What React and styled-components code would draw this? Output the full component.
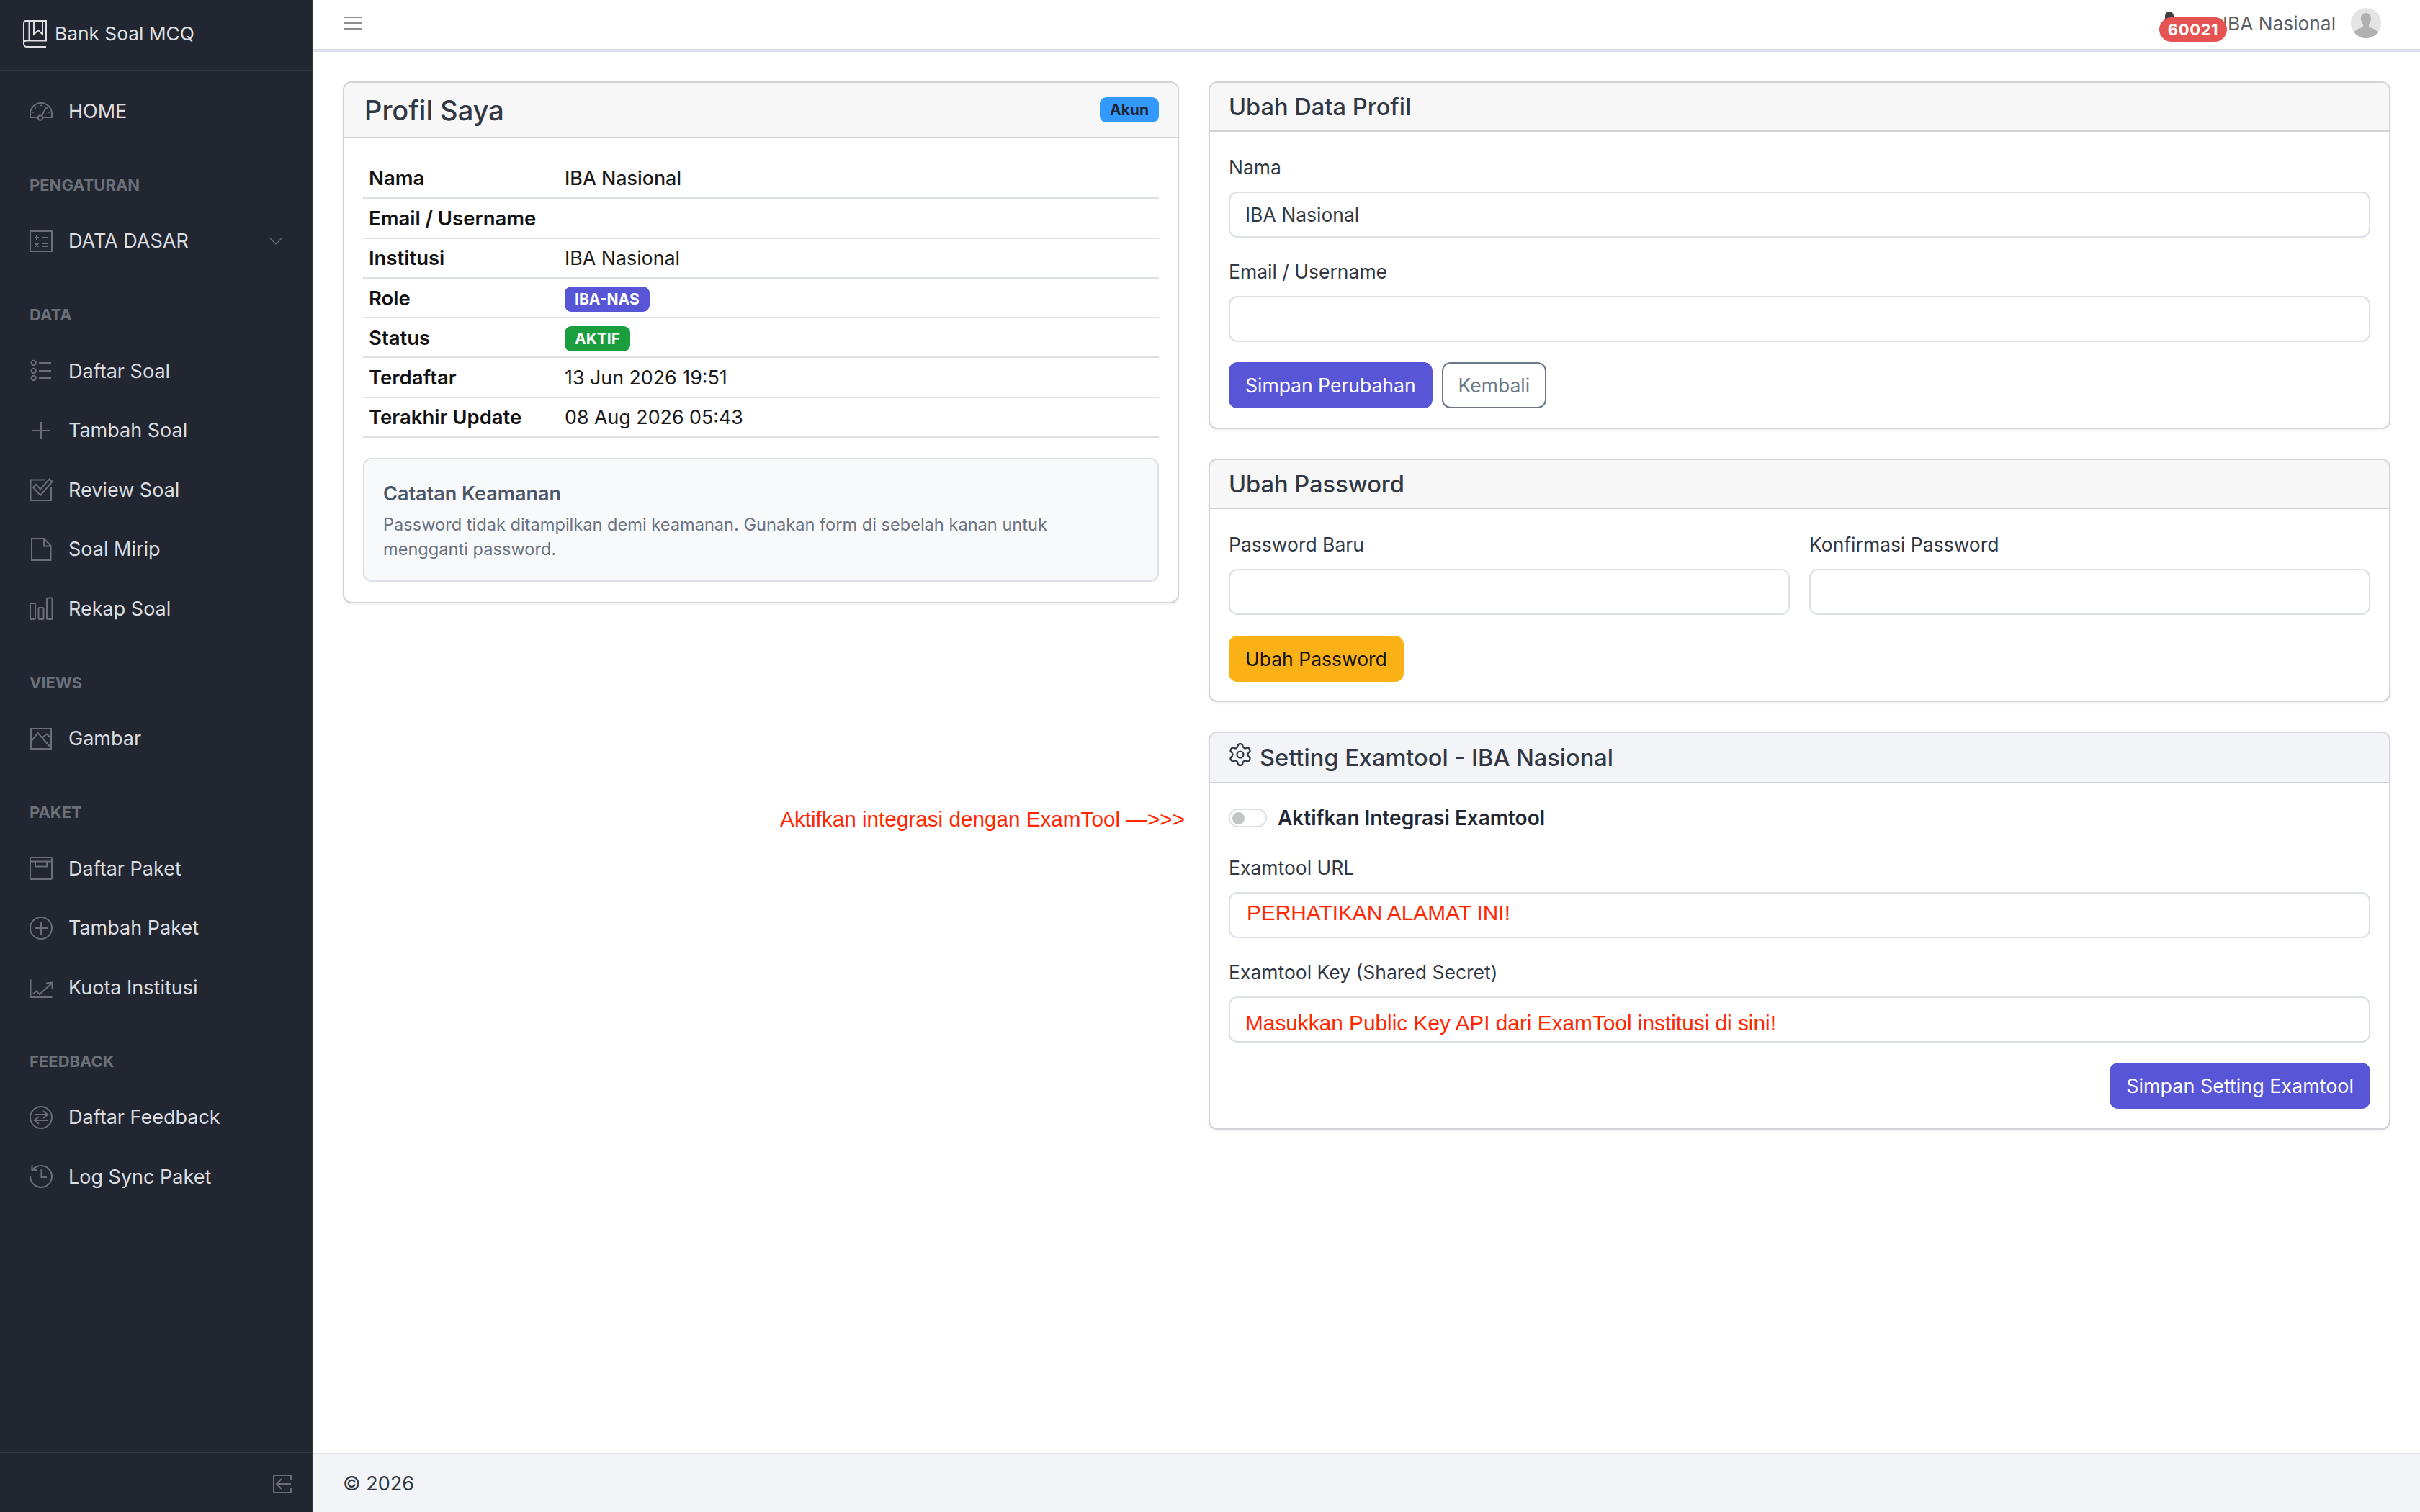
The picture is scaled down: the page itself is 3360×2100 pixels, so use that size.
import React from "react";
import styled, { createGlobalStyle } from "styled-components";
import { Settings } from "lucide-react";

const Global = createGlobalStyle`
  html, body { margin: 0; padding: 0; background: #fff; }
  * { box-sizing: border-box; }
  body { font-family: Inter, "Noto Sans", sans-serif; color: #212631; }
`;

const Shell = styled.div`display: flex; height: 2100px; width: 3360px; overflow: hidden;`;
const Sidebar = styled.aside`
  width: 435px; flex: none; background: #212631; border-right: 2px solid #2f3541;
  display: flex; flex-direction: column;
`;
const Brand = styled.div`
  height: 99px; flex: none; border-bottom: 2px solid #2f3541; display: flex; align-items: center;
  gap: 11px; padding: 0 0 4px 32px; color: #dfe0e3; font-size: 26.3px;
`;
const Nav = styled.nav`flex: 1; padding-top: 14px;`;
const NavItem = styled.div`
  height: 82.6px; display: flex; align-items: center; padding: 0 41px 0 41px; gap: 22px;
  color: #dcdde0; font-size: 27px;
  svg { flex: none; }
`;
const Chevron = styled.span`margin-left: auto; display: flex;`;
const NavTitle = styled.div`
  margin: 45.3px 0 19.5px; padding-left: 41px; height: 33px; line-height: 33px;
  font-size: 22px; font-weight: 700; color: #6c7079; text-transform: uppercase;
`;
const SideFoot = styled.div`
  height: 84px; flex: none; border-top: 2px solid #2f3541; display: flex; justify-content: flex-end;
  align-items: center; padding: 4px 28px 0 0;
`;
const Main = styled.div`flex: 1; display: flex; flex-direction: column; min-width: 0;`;
const TopBar = styled.header`
  height: 72px; flex: none; border-bottom: 4px solid #dbdfe9; display: flex; align-items: center;
  padding: 0 54px 4px 41px; position: relative;
`;
const Burger = styled.span`display: flex; width: 28px; margin-left: 2px;`;
const UserName = styled.span`margin-left: auto; font-size: 26.3px; color: #5c5f66; margin-right: 21px;`;
const Avatar = styled.span`display: flex;`;
const BellWrap = styled.span`position: absolute; left: 2565px; top: 14px; display: flex;`;
const CountBadge = styled.span`
  position: absolute; left: 2563px; top: 24px; width: 94px; height: 34px; border-radius: 17px;
  background: #e55353; color: #fff; font-size: 22px; font-weight: 700; letter-spacing: .6px;
  display: flex; align-items: center; justify-content: center;
`;
const Content = styled.main`
  flex: 1; position: relative; padding: 41px; display: grid; grid-template-columns: 1161px 1641px; gap: 41px;
  align-items: start;
`;
const Column = styled.div`display: flex; flex-direction: column; gap: 41px;`;
const Card = styled.section`
  border: 2px solid #d3d4d8; border-radius: 12px; background: #fff; overflow: hidden;
  box-shadow: 0 2px 4px rgba(0,0,0,.06);
`;
const CardHead = styled.div`
  height: ${p => p.$h}px; background: ${p => p.$bg || "#f7f7f8"}; border-bottom: 2px solid #d0d1d5;
  display: flex; align-items: center; padding: 0 26px 0 ${p => p.$pl || 26}px; gap: 9px; justify-content: ${p => p.$between ? "space-between" : "flex-start"};
`;
const GearIcon = styled(Settings)`margin: -8px 0 0 -2px; flex: none;`;
const CardTitle = styled.h2`
  margin: 0; font-weight: 500; font-size: ${p => p.$size || 32.6}px; color: #323843;
`;
const CardBody = styled.div`padding: ${p => p.$top || 28}px 26px ${p => p.$bottom || 28}px;`;
const Pill = styled.span`
  display: inline-flex; align-items: center; justify-content: center; height: 35px; padding: 0 14px;
  border-radius: 9px; background: ${p => p.$bg}; color: ${p => p.$color || "#fff"}; font-size: 21px; font-weight: 700;
`;
const RowPill = styled(Pill)`margin-top: 3px;`;
const InfoTable = styled.table`width: 100%; border-collapse: collapse; font-size: 27.5px;`;
const Row = styled.tr`height: 55.3px; border-bottom: 2px solid #dbdfe6;`;
const Th = styled.th`width: 280px; text-align: left; padding: 0 8px; font-weight: 600; color: #111;`;
const Td = styled.td`padding: 0; color: #1a1a1a; font-size: 26.8px;`;
const NameCell = styled(Td)`font-weight: 500;`;
const Note = styled.div`
  margin-top: 28px; height: 172px; border: 2px solid #dbdfe6; border-radius: 12px; background: #f8f9fb;
  padding: 28px 120px 0 26px;
`;
const NoteTitle = styled.div`font-size: 27px; font-weight: 600; color: #4a5568; line-height: 40px;`;
const NoteText = styled.div`font-size: 23.6px; color: #6b7280; line-height: 34px; margin-top: 6px;`;
const Field = styled.div`margin-bottom: ${p => p.$mb ?? 30}px;`;
const Label = styled.label`display: block; font-size: 26.5px; color: #323843; height: 34px; line-height: 34px; margin-bottom: 17px;`;
const Input = styled.input`
  display: block; width: 100%; height: 64px; border: 2px solid #dbdfe6; border-radius: 12px; background: #fff;
  padding: 0 21px; font: 26.5px Inter, sans-serif; color: #323843; outline: none;
`;
const RedInput = styled(Input)`
  font: 29.8px "Liberation Sans", Arial, sans-serif; color: #ff2600; padding-left: ${p => p.$pl || 22}px;
  padding-top: ${p => p.$pt || 0}px; padding-bottom: ${p => p.$pb || 0}px;
`;
const Actions = styled.div`display: flex; gap: 13px; justify-content: ${p => p.$end ? "flex-end" : "flex-start"};`;
const Button = styled.button`
  height: 64px; padding: 0 21px; border-radius: 12px; font: ${p => p.$fs || 26.5}px Inter, sans-serif;
  background: ${p => p.$bg || "#fff"}; color: ${p => p.$color || "#fff"};
  border: 2px solid ${p => p.$border || p.$bg};
`;
const TwoCols = styled.div`display: grid; grid-template-columns: 1fr 1fr; gap: 27px;`;
const ToggleRow = styled.div`display: flex; align-items: center; gap: 15px; height: 26px; margin-bottom: 39px;`;
const Toggle = styled.span`
  width: 53px; height: 26px; border: 2px solid #dbdfe6; border-radius: 13px; background: #fff; position: relative; display: block;
  &::after { content: ""; position: absolute; left: 3px; top: 2.5px; width: 17px; height: 17px; border-radius: 50%; background: #c3c4c4; }
`;
const ToggleLabel = styled.span`font-size: 28px; font-weight: 600; color: #212631;`;
const Annotation = styled.div`
  position: absolute; right: 1715px; top: 1049px; font: 29.7px "Liberation Sans", Arial, sans-serif; color: #ff2600; white-space: nowrap;
`;
const Footer = styled.footer`
  height: 82px; flex: none; background: #f3f4f7; border-top: 2px solid #dfe1e7; display: flex; align-items: center;
  padding: 0 41px; font-size: 27px; color: #323843;
`;

const Ic = ({ children, w = 32, h = 32, vb = "0 0 32 32", color = "#6b6e76", sw = 2 }) => (
  <svg width={w} height={h} viewBox={vb} fill="none" stroke={color} strokeWidth={sw}>{children}</svg>
);
const Dots = styled.g`fill: #6b6e76; stroke: none;`;
const I = {
  home: <Ic><path d="M11.500 25H1V20A15 15 0 0 1 31 20V25H19" /><circle cx="15" cy="25.500" r="3.200" /><path d="M17 23L23 11" /><Dots><circle cx="16" cy="8.500" r="1" /><circle cx="8" cy="12" r="1" /><circle cx="24" cy="12" r="1" /><circle cx="5" cy="18" r="1" /><circle cx="27" cy="18" r="1" /></Dots></Ic>,
  calc: <Ic><rect x="1" y="2" width="30" height="28" /><path d="M7 11h6 M10 8v6 M18 11h8 M18 19h8 M18 23h8 M7.500 18.500l5 5 M12.500 18.500l-5 5" /></Ic>,
  list: <Ic><circle cx="5.700" cy="5" r="3.200" /><circle cx="5.700" cy="16" r="3.200" /><circle cx="5.700" cy="26" r="3.200" /><path d="M13 5h17 M13 16h17 M13 26h17" /></Ic>,
  plus: <Ic><path d="M16 4v24 M4 16h24" /></Ic>,
  task: <Ic><path d="M30 12V31H1.500V2.500H22" /><path d="M5 13L15 24L31.500 5L27.500 1.500L15 15.500L9 9Z" /></Ic>,
  file: <Ic><path d="M3 1H20L29.500 11V31H3Z M20 1V11.500H29.500" /></Ic>,
  bars: <Ic><rect x="1" y="9" width="7" height="22" rx="1" /><rect x="12.500" y="15" width="7" height="16" rx="1" /><rect x="24" y="1.500" width="7.500" height="29.500" rx="1" /></Ic>,
  image: <Ic><rect x="2" y="2" width="28" height="28" /><path d="M2.300 19.500L11.700 8L29.700 28.500 M18.300 14L24 9.500L29.700 15" /></Ic>,
  box: <Ic><rect x="1" y="1" width="30" height="30" rx="1" /><path d="M1 6.500H31 M8 6.500V13.500H24V6.500" /></Ic>,
  plusc: <Ic><circle cx="16" cy="16" r="15" /><path d="M16 7v18 M7 16h18" /></Ic>,
  chart: <Ic><path d="M1.500 5.500V30H31.500 M5 25.500L9.500 21.500L14 26L30.500 11 M23 10.500L31.500 9.500V18" /></Ic>,
  swap: <Ic><circle cx="16" cy="16" r="15" /><path d="M7 12H25 M19 7l6 5-6 5 M25 20H7 M13 15l-6 5 6 5" /></Ic>,
  hist: <Ic><path d="M4 7A15 15 0 1 1 1 16 M3.500 .5V7H10 M16.500 6V17H24" /></Ic>,
};

const NavRow = ({ icon, children, right }) => (
  <NavItem>{icon}{children}{right && <Chevron>{right}</Chevron>}</NavItem>
);

const rows = [
  ["Nama", <NameCell key="n">IBA Nasional</NameCell>],
  ["Email / Username", <Td key="e" />],
  ["Institusi", <Td key="i">IBA Nasional</Td>],
  ["Role", <Td key="r"><RowPill $bg="#5856d6">IBA-NAS</RowPill></Td>],
  ["Status", <Td key="s"><RowPill $bg="#1b9e3e">AKTIF</RowPill></Td>],
  ["Terdaftar", <Td key="t">13 Jun 2026 19:51</Td>],
  ["Terakhir Update", <Td key="u">08 Aug 2026 05:43</Td>],
];

export default function App() {
  return (
    <>
      <Global />
      <Shell>
        <Sidebar>
          <Brand>
            <Ic w={33} h={38} vb="0 0 33 38" color="#dfe0e3" sw={2}>
              <path d="M4 1H32V28.500H5Q1 28.500 1 32.500T5 37H32 M1 32.500V5Q1 1 4 1 M8.500 1V28.500 M15 1V19.500L21 14L27 19.500V1" />
            </Ic>
            Bank Soal MCQ
          </Brand>
          <Nav>
            <NavRow icon={I.home}>HOME</NavRow>
            <NavTitle>Pengaturan</NavTitle>
            <NavRow icon={I.calc} right={<Ic w={18} h={18} vb="0 0 18 18" sw={1.2}><path d="M1 5l8 8 8-8" /></Ic>}>DATA DASAR</NavRow>
            <NavTitle>Data</NavTitle>
            <NavRow icon={I.list}>Daftar Soal</NavRow>
            <NavRow icon={I.plus}>Tambah Soal</NavRow>
            <NavRow icon={I.task}>Review Soal</NavRow>
            <NavRow icon={I.file}>Soal Mirip</NavRow>
            <NavRow icon={I.bars}>Rekap Soal</NavRow>
            <NavTitle>Views</NavTitle>
            <NavRow icon={I.image}>Gambar</NavRow>
            <NavTitle>Paket</NavTitle>
            <NavRow icon={I.box}>Daftar Paket</NavRow>
            <NavRow icon={I.plusc}>Tambah Paket</NavRow>
            <NavRow icon={I.chart}>Kuota Institusi</NavRow>
            <NavTitle>Feedback</NavTitle>
            <NavRow icon={I.swap}>Daftar Feedback</NavRow>
            <NavRow icon={I.hist}>Log Sync Paket</NavRow>
          </Nav>
          <SideFoot>
            <Ic w={26} h={26} vb="0 0 26 26"><path d="M25 8V1H1V25H25V18 M25 13H6 M12 6l-7 7 7 7" /></Ic>
          </SideFoot>
        </Sidebar>
        <Main>
          <TopBar>
            <Burger>
              <Ic w={24} h={20} vb="0 0 24 20" color="#666a70" sw={1.6}><path d="M0 2h24 M0 10h24 M0 18h24" /></Ic>
            </Burger>
            <UserName>IBA Nasional</UserName>
            <BellWrap>
              <svg width="24" height="24" viewBox="0 0 24 24"><path d="M12 2a6 6 0 0 0-6 6v6l-2 4h16l-2-4V8a6 6 0 0 0-6-6z" fill="#3d3f45" /></svg>
            </BellWrap>
            <CountBadge>60021</CountBadge>
            <Avatar>
              <svg width="42" height="42" viewBox="0 0 42 42">
                <defs><clipPath id="av"><circle cx="21" cy="21" r="21" /></clipPath></defs>
                <g clipPath="url(#av)">
                  <rect width="42" height="42" fill="#e4e4e4" />
                  <path d="M21 7c5 0 7.500 4 7 9-.3 3-1.500 5-3 7v3c2 2 9 3 12 7v9H5v-9c3-4 10-5 12-7v-3c-1.500-2-2.700-4-3-7-.5-5 2-9 7-9z" fill="#b1b1b1" />
                </g>
              </svg>
            </Avatar>
          </TopBar>
          <Content>
            <Column>
              <Card>
                <CardHead $h={77} $between $pl={28}>
                  <CardTitle $size={38}>Profil Saya</CardTitle>
                  <Pill $bg="#3399ff" $color="#1e2430">Akun</Pill>
                </CardHead>
                <CardBody>
                  <InfoTable>
                    <tbody>
                      {rows.map(([k, v]) => (
                        <Row key={k}><Th>{k}</Th>{v}</Row>
                      ))}
                    </tbody>
                  </InfoTable>
                  <Note>
                    <NoteTitle>Catatan Keamanan</NoteTitle>
                    <NoteText>Password tidak ditampilkan demi keamanan. Gunakan form di sebelah kanan untuk mengganti password.</NoteText>
                  </Note>
                </CardBody>
              </Card>
            </Column>
            <Column>
              <Card>
                <CardHead $h={68}><CardTitle>Ubah Data Profil</CardTitle></CardHead>
                <CardBody $top={32} $bottom={27}>
                  <Field>
                    <Label>Nama</Label>
                    <Input readOnly value="IBA Nasional" />
                  </Field>
                  <Field $mb={28}>
                    <Label>Email / Username</Label>
                    <Input readOnly value="" />
                  </Field>
                  <Actions>
                    <Button $bg="#5856d6">Simpan Perubahan</Button>
                    <Button $color="#6b7785" $border="#6b7785">Kembali</Button>
                  </Actions>
                </CardBody>
              </Card>
              <Card>
                <CardHead $h={68}><CardTitle>Ubah Password</CardTitle></CardHead>
                <CardBody $top={32} $bottom={26}>
                  <TwoCols>
                    <Field $mb={29}>
                      <Label>Password Baru</Label>
                      <Input type="password" readOnly />
                    </Field>
                    <Field $mb={29}>
                      <Label>Konfirmasi Password</Label>
                      <Input type="password" readOnly />
                    </Field>
                  </TwoCols>
                  <Actions>
                    <Button $bg="#f9b115" $color="#111">Ubah Password</Button>
                  </Actions>
                </CardBody>
              </Card>
              <Card>
                <CardHead $h={70} $bg="#f3f4f7">
                  <GearIcon size={36} strokeWidth={1.5} color="#323843" />
                  <CardTitle>Setting Examtool - IBA Nasional</CardTitle>
                </CardHead>
                <CardBody $top={35} $bottom={27}>
                  <ToggleRow>
                    <Toggle />
                    <ToggleLabel>Aktifkan Integrasi Examtool</ToggleLabel>
                  </ToggleRow>
                  <Field>
                    <Label>Examtool URL</Label>
                    <RedInput readOnly value="PERHATIKAN ALAMAT INI!" $pl={23} $pb={6} />
                  </Field>
                  <Field $mb={28}>
                    <Label>Examtool Key (Shared Secret)</Label>
                    <RedInput readOnly value="Masukkan Public Key API dari ExamTool institusi di sini!" $pl={21} $pt={10} />
                  </Field>
                  <Actions $end>
                    <Button $bg="#5856d6" $fs={26.9}>Simpan Setting Examtool</Button>
                  </Actions>
                </CardBody>
              </Card>
            </Column>
            <Annotation>Aktifkan integrasi dengan ExamTool —&gt;&gt;&gt;</Annotation>
          </Content>
          <Footer>© 2026</Footer>
        </Main>
      </Shell>
    </>
  );
}
